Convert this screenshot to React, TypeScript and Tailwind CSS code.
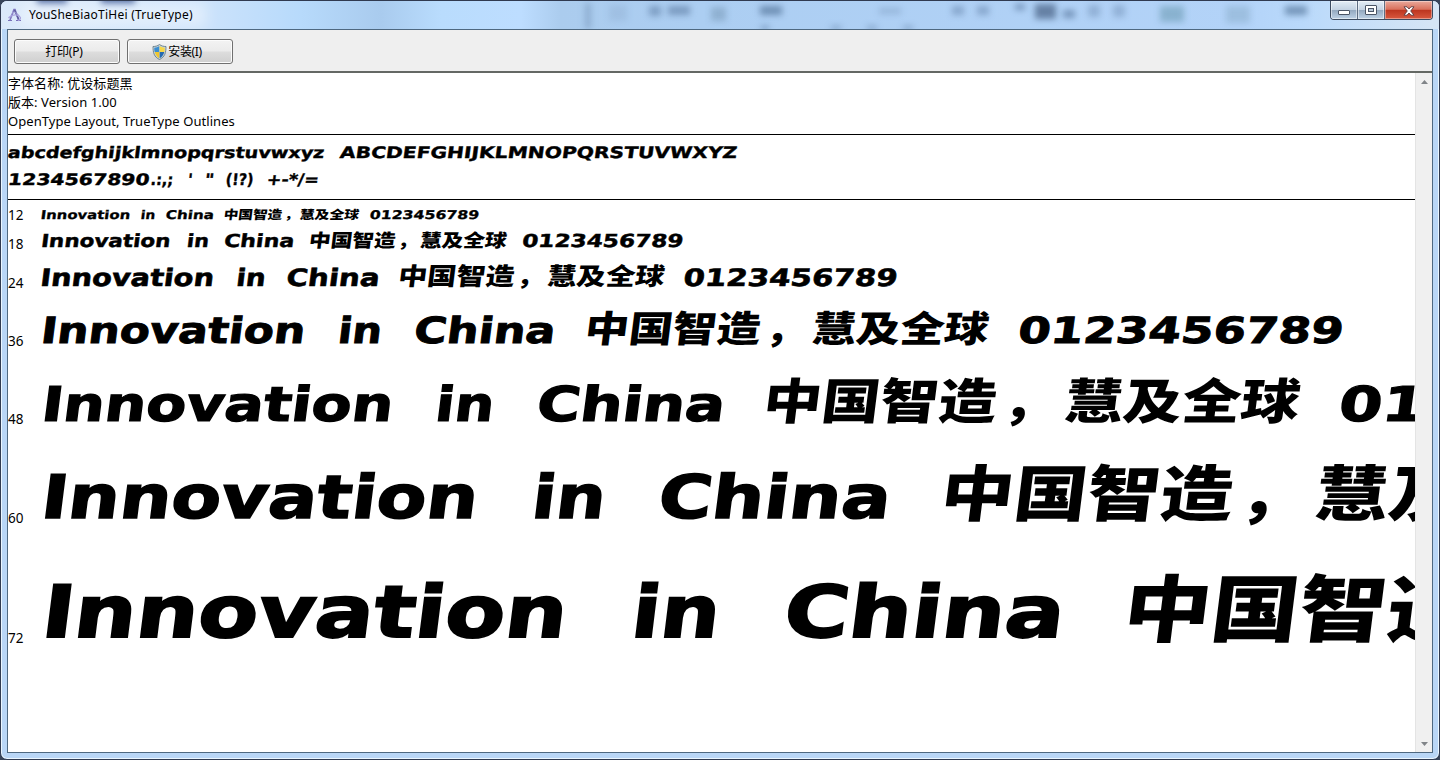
import { useLayoutEffect, useRef, useState } from "react";

interface Word {
  text: string;
  // start and width in em of the row's font size
  x: number;
  w: number;
  kind?: "latin" | "cjk";
}

const SAMPLE: Word[] = [
  { text: "Innovation", x: -0.02, w: 5.48 },
  { text: "in", x: 6.14, w: 0.92 },
  { text: "China", x: 7.72, w: 2.93 },
  { text: "中国智造", x: 11.27, w: 3.66, kind: "cjk" },
  { text: "，", x: 15.02, w: 0.84, kind: "cjk" },
  { text: "慧及全球", x: 15.97, w: 3.68, kind: "cjk" },
  { text: "0123456789", x: 20.25, w: 6.76 },
];

const LETTERS: Word[] = [
  { text: "abcdefghijklmnopqrstuvwxyz", x: -0.04, w: 15.1 },
  { text: "ABCDEFGHIJKLMNOPQRSTUVWXYZ", x: 15.76, w: 18.9 },
];

const SYMBOLS: Word[] = [
  { text: "1234567890", x: -0.04, w: 6.78 },
  { text: ".:,;", x: 6.78, w: 1.1 },
  { text: "'", x: 8.54, w: 0.22 },
  { text: '"', x: 9.34, w: 0.42 },
  { text: "(!?)", x: 10.34, w: 1.35 },
  { text: "+-*/=", x: 12.28, w: 2.48 },
];

// k is the hinted advance correction at that size
const ROWS = [
  { pt: 12, height: 20, k: 1.014 },
  { pt: 18, height: 29, k: 0.99 },
  { pt: 24, height: 39, k: 0.991 },
  { pt: 36, height: 58, k: 1.004 },
  { pt: 48, height: 78, k: 1 },
  { pt: 60, height: 99, k: 0.996 },
  { pt: 72, height: 120, k: 0.998 },
];

// stretches a word to its advance width and slants it
function FitWord({ text, gap, w, kind = "latin" }: { text: string; gap: number; w: number; kind?: "latin" | "cjk" }) {
  const ref = useRef<HTMLSpanElement>(null);
  const [scale, setScale] = useState(1);

  useLayoutEffect(() => {
    const el = ref.current;
    if (!el || !el.parentElement) return;
    setScale(el.parentElement.offsetWidth / el.offsetWidth);
  }, [text, w]);

  const dy = kind === "cjk" ? -0.03 : 0.074;

  return (
    <span className="block shrink-0 leading-none" style={{ width: `${w}em`, marginLeft: `${gap}em` }}>
      <span
        ref={ref}
        className={
          kind === "cjk"
            ? "block w-max origin-bottom-left font-['Noto_Sans_CJK_SC',sans-serif] text-[0.76em] leading-none font-black"
            : "block w-max origin-bottom-left font-['DejaVu_Sans','Noto_Sans_CJK_SC',sans-serif] text-[0.75em] leading-none font-bold [-webkit-text-stroke:0.025em_#000]"
        }
        style={{ transform: `translateY(${dy}em) scaleX(${scale}) skewX(-6deg)` }}
      >
        {text}
      </span>
    </span>
  );
}

function Line({ words, size, k = 1 }: { words: Word[]; size: number; k?: number }) {
  return (
    <div className="flex items-end whitespace-nowrap" style={{ fontSize: size }}>
      {words.map((word, i) => {
        const prev = words[i - 1];
        const end = prev ? prev.x + prev.w : 0;
        return <FitWord key={word.text} text={word.text} w={word.w * k} gap={(word.x - end) * k} kind={word.kind} />;
      })}
    </div>
  );
}

function FontIcon() {
  return (
    <svg width="16" height="16" viewBox="0 0 16 16" fill="none">
      <path d="M3 13 7 2.500h1L11.500 13" stroke="#7d74bd" strokeWidth="1.600" />
      <path d="M7.500 3 12 13" stroke="#5f5a9e" strokeWidth="1.600" />
      <path d="M1 13.500h4M9 13.500h5" stroke="#7870b8" strokeWidth="1.200" />
      <path d="M1.500 11C4 8 9 7 12 9s1 4-1 4.500" stroke="#aaa4de" strokeWidth="1.300" />
      <path d="M5 6c3-1 6 0 7 3" stroke="#a9a6dc" />
    </svg>
  );
}

function ShieldIcon() {
  return (
    <svg width="15" height="16" viewBox="0 0 15 16">
      <path d="M7.500.5C5.500 2 3.500 2.500 1 2.500c0 6 1 10.500 6.500 13 5.500-2.500 6.500-7 6.500-13-2.500 0-4.500-.5-6.500-2z" fill="#c9d6da" stroke="#647c88" strokeWidth=".9" />
      <path d="M7.300 2C5.700 3.100 4.300 3.600 2.200 3.700c0 1.500.1 3 .5 4.400h4.600z" fill="#3b8ed2" />
      <path d="M7.700 2c1.600 1.100 3 1.600 5.100 1.700 0 1.500-.1 3-.5 4.400H7.700z" fill="#f7d747" />
      <path d="M7.300 8.100H2.700c.8 3 2.300 5 4.600 6.200z" fill="#efc62f" />
      <path d="M7.700 8.100h4.600c-.8 3-2.300 5-4.600 6.200z" fill="#2468b0" />
    </svg>
  );
}

// toolbar of the window behind, seen through the glass
const SMUDGES = [
  "left-[36px] top-[-7px] h-[10px] w-[30px] bg-[#27458a]/80",
  "left-[100px] top-[-7px] h-[10px] w-[34px] bg-[#27458a]/80",
  "left-[584px] top-[2px] h-[26px] w-[6px] bg-[#6f8fb4]/50",
  "left-[608px] top-[4px] h-[16px] w-[18px] bg-[#7d9cc0]/25",
  "left-[648px] top-[5px] h-[10px] w-[12px] bg-[#4a6890]/45",
  "left-[667px] top-[5px] h-[9px] w-[22px] bg-[#4a6890]/50",
  "left-[710px] top-[6px] h-[14px] w-[15px] bg-[#5a7c96]/35",
  "left-[759px] top-[5px] h-[9px] w-[22px] bg-[#3d5c84]/55",
  "left-[760px] top-[25px] h-[4px] w-[8px] bg-[#3d5c84]/50",
  "left-[830px] top-[25px] h-[4px] w-[10px] bg-[#3d5c84]/40",
  "left-[866px] top-[25px] h-[4px] w-[10px] bg-[#3d5c84]/40",
  "left-[902px] top-[25px] h-[4px] w-[10px] bg-[#3d5c84]/40",
  "left-[878px] top-[7px] h-[6px] w-[22px] bg-[#4a6890]/25",
  "left-[951px] top-[5px] h-[9px] w-[12px] bg-[#4a6890]/40",
  "left-[976px] top-[5px] h-[9px] w-[12px] bg-[#4a6890]/40",
  "left-[1014px] top-[3px] h-[6px] w-[10px] bg-[#3d5c84]/50",
  "left-[1034px] top-[3px] h-[15px] w-[21px] bg-[#344c70]/60",
  "left-[1062px] top-[9px] h-[8px] w-[12px] bg-[#3d5c84]/50",
  "left-[1087px] top-[4px] h-[12px] w-[12px] bg-[#4a6890]/30",
  "left-[1112px] top-[4px] h-[12px] w-[12px] bg-[#4a6890]/30",
  "left-[1159px] top-[5px] h-[16px] w-[24px] bg-[#4b8294]/40",
  "left-[1225px] top-[5px] h-[17px] w-[24px] bg-[#6b92a8]/30",
  "left-[1284px] top-[5px] h-[9px] w-[22px] bg-[#3d5c84]/55",
];

function TitleBar() {
  return (
    <div className="relative flex h-[28px] shrink-0 justify-between overflow-hidden bg-[linear-gradient(90deg,#dbe9fa_0,#cde3fb_200px,#b7dafb_300px,#a9cbee_380px,#b9dcfd_440px,#bdddff_520px,#abccee_560px,#accef2_700px,#b3d3f8_1240px,#b9d9fb_1300px,#d5e5f5_1430px)]">
      {SMUDGES.map((cls) => (
        <div key={cls} className={`absolute blur-[3px] ${cls}`} />
      ))}
      <div className="absolute left-[20px] top-[2px] h-[24px] w-[185px] bg-white/40 blur-[7px]" />
      <div className="relative flex items-center gap-[6px] pl-[6px] text-[12px] text-black">
        <FontIcon />
        <span className="tracking-[0.25px]">YouSheBiaoTiHei (TrueType)</span>
      </div>
      <div className="relative mr-[6px] flex h-[19px] w-[103px] overflow-hidden rounded-b-[4px] border border-t-0 border-[#3c4b60]">
        <div className="flex w-[27px] items-center justify-center border-r border-[#5d6d82] bg-[linear-gradient(#e3edf6_0%,#c3d2e2_48%,#94a9c0_52%,#bed2e6_100%)] shadow-[inset_0_0_0_1px_#ffffff80]">
          <div className="mt-[5px] h-[5px] w-[12px] rounded-[1px] border border-[#4b5566] bg-white" />
        </div>
        <div className="flex w-[27px] items-center justify-center border-r border-[#5d6d82] bg-[linear-gradient(#e3edf6_0%,#c3d2e2_48%,#94a9c0_52%,#bed2e6_100%)] shadow-[inset_0_0_0_1px_#ffffff80]">
          <div className="flex h-[10px] w-[12px] items-center justify-center rounded-[1px] border border-[#4b5566] bg-white">
            <div className="h-[4px] w-[6px] border border-[#4b5566] bg-[#b9c8d8]" />
          </div>
        </div>
        <div className="flex flex-1 items-center justify-center bg-[linear-gradient(#e9a99c_0%,#d9705c_46%,#bd3620_52%,#d9593f_100%)] shadow-[inset_0_0_0_1px_#ffffff60]">
          <svg width="12" height="10" viewBox="0 0 12 10" className="mt-px">
            <path d="M1 .8h3L6 3l2-2.200h3L7.700 5 11 9.200H8L6 7 4 9.200H1L4.300 5z" fill="#fff" stroke="#5a3a3f" strokeWidth=".9" />
          </svg>
        </div>
      </div>
    </div>
  );
}

function Toolbar() {
  const button =
    "flex h-[25px] w-[106px] items-center justify-center rounded-[3px] border border-[#707070] bg-[linear-gradient(#f3f3f3_0%,#ebebeb_48%,#dddddd_52%,#cfcfcf_100%)] text-[12px] tracking-[-0.2px] shadow-[inset_0_0_0_1px_#fcfcfc]";
  return (
    <div className="flex h-[43px] shrink-0 gap-[7px] border-b-2 border-[#646864] bg-[#efefef] pl-[6px] pt-[9px]">
      <button type="button" className={button}>
        <span className="mr-[6px]">打印(P)</span>
      </button>
      <button type="button" className={button}>
        <span className="-ml-[6px]">
          <ShieldIcon />
        </span>
        <span className="ml-px tracking-[-0.4px]">安装(I)</span>
      </button>
    </div>
  );
}

function ScrollBar() {
  return (
    <div className="flex w-[17px] shrink-0 flex-col items-center justify-between border-l border-[#e4e4e4] bg-[#f0f0f0] pb-[6px] pt-[7px]">
      <svg width="7" height="4" viewBox="0 0 7 4">
        <path d="M0 4 3.500 0 7 4z" fill="#808488" />
      </svg>
      <svg width="7" height="4" viewBox="0 0 7 4">
        <path d="M0 0h7L3.500 4z" fill="#808488" />
      </svg>
    </div>
  );
}

export default function App() {
  return (
    <div className="h-[760px] w-[1440px] bg-[#39455a] font-['Noto_Sans','Noto_Sans_CJK_SC',sans-serif] text-black">
      <div className="flex h-full w-full flex-col overflow-hidden rounded-[7px] border border-[#303a50] bg-[#b9d6f6] shadow-[inset_0_0_0_1px_#eaf6ff]">
        <TitleBar />
        <div className="mx-[6px] mb-[6px] flex min-h-0 flex-1 flex-col border border-[#4e6880] bg-white">
          <Toolbar />
          <div className="flex min-h-0 flex-1">
            <div className="min-w-0 flex-1 overflow-hidden">
              <div className="h-[62px] border-b border-black pt-px text-[13px] leading-[19px] tracking-[0.06px]">
                <p>字体名称: 优设标题黑</p>
                <p>版本: Version 1.00</p>
                <p>OpenType Layout, TrueType Outlines</p>
              </div>
              <div className="h-[65px] border-b border-black">
                <div className="flex h-[25px] items-end">
                  <Line words={LETTERS} size={21} />
                </div>
                <div className="flex h-[27px] items-end">
                  <Line words={SYMBOLS} size={21} />
                </div>
              </div>
              {ROWS.map(({ pt, height, k }) => (
                <div key={pt} className="flex items-end" style={{ height }}>
                  <span className="-mb-[5px] w-[32px] shrink-0 text-[13.500px] leading-[20px]">{pt}</span>
                  <Line words={SAMPLE} size={(pt * 4) / 3} k={k} />
                </div>
              ))}
            </div>
            <ScrollBar />
          </div>
        </div>
      </div>
    </div>
  );
}
